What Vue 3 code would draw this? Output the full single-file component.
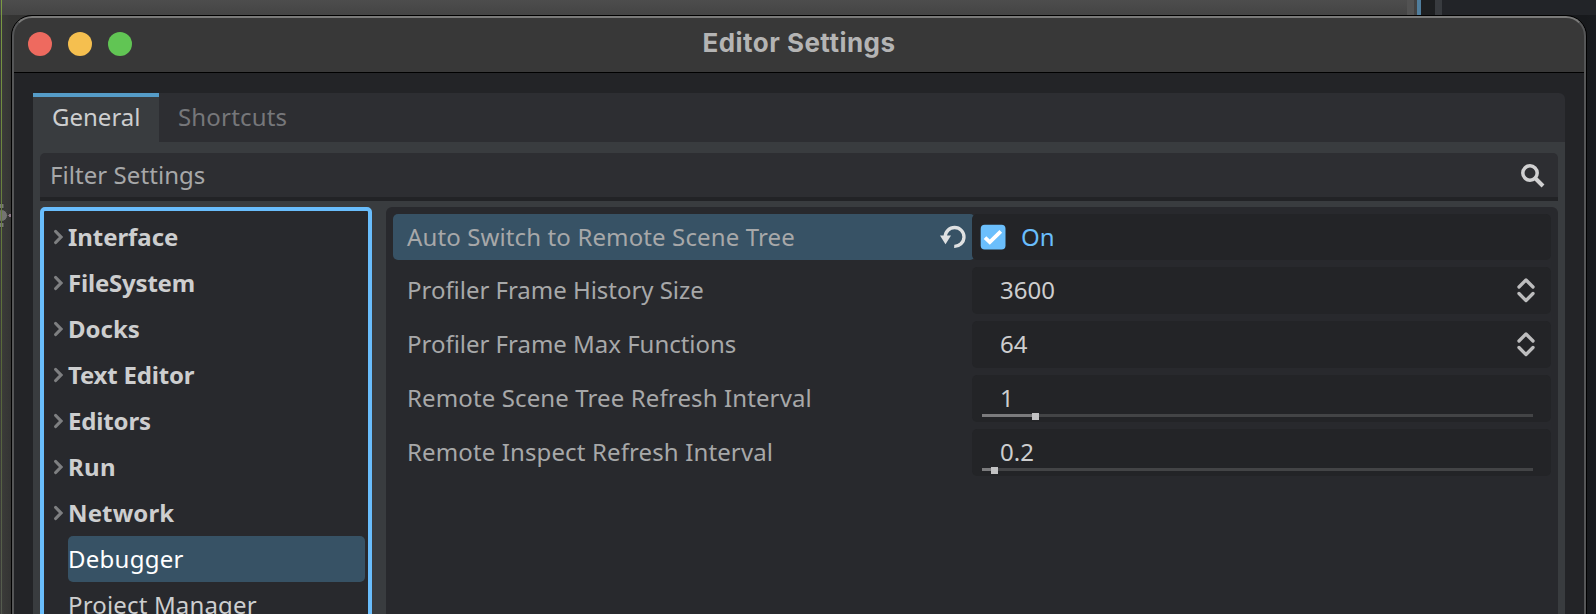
<script setup>
const groups = [
  { name: 'Interface', track: -0.06 },
  { name: 'FileSystem', track: -0.2 },
  { name: 'Docks', track: 0 },
  { name: 'Text Editor', track: -0.2 },
  { name: 'Editors', track: -0.15 },
  { name: 'Run', track: 0.3 },
  { name: 'Network', track: 0.14 },
]
const rows = [
  { label: 'Auto Switch to Remote Scene Tree', track: 0.125, kind: 'check', value: 'On' },
  { label: 'Profiler Frame History Size', track: -0.03, kind: 'spin', value: '3600' },
  { label: 'Profiler Frame Max Functions', track: -0.02, kind: 'spin', value: '64' },
  { label: 'Remote Scene Tree Refresh Interval', track: 0.12, kind: 'slider', value: '1', pos: 53 },
  { label: 'Remote Inspect Refresh Interval', track: 0.125, kind: 'slider', value: '0.2', pos: 12 },
]
</script>

<template>
  <div class="desktop">
    <div class="backdrop">
      <i class="viewport"></i><i class="scroll"></i><i class="gutter"></i><i class="accent"></i><i class="dock-edge"></i><i class="split"></i><i class="dock"></i>
    </div>
    <svg class="gizmo" viewBox="0 0 11 28" width="11" height="28">
      <path d="M0 14.5h11" stroke="#75666f" stroke-width="1" />
      <rect x="-2" y="2.500" width="6" height="5" fill="#787876" stroke="#343434" />
      <rect x="-2" y="21.500" width="6" height="5" fill="#787876" stroke="#343434" />
      <circle cx="1.500" cy="14.500" r="6" fill="#747472" stroke="#343434" />
      <rect x="9" y="13" width="2" height="3" fill="#8c7888" />
    </svg>
    <div class="window">
      <header class="titlebar">
        <div class="lights"><b class="red"></b><b class="yellow"></b><b class="green"></b></div>
        <h1>Editor Settings</h1>
      </header>
      <main class="body">
        <nav class="tabs">
          <div class="tab active"><span>General</span></div>
          <div class="tab other"><span>Shortcuts</span></div>
        </nav>
        <section class="panel">
          <div class="filter">
            <span>Filter Settings</span>
            <svg width="26" height="26" viewBox="0 0 26 26" fill="none" stroke="#d0d0d1">
              <circle cx="10" cy="10" r="7.200" stroke-width="3.500" />
              <path d="M15.500 15.500L23 23" stroke-width="4" />
            </svg>
          </div>
          <div class="split-view">
            <div class="tree">
              <div v-for="g in groups" :key="g.name" class="node">
                <svg width="10" height="16" viewBox="0 0 10 16"><path d="M2.700 2.500L8 8L2.700 13.500" fill="none" stroke="#7e7f81" stroke-width="3.200" stroke-linecap="round" /></svg>
                <span class="bold" :style="{ letterSpacing: g.track + 'px' }">{{ g.name }}</span>
              </div>
              <div class="leaf selected"><span>Debugger</span></div>
              <div class="leaf"><span>Project Manager</span></div>
            </div>
            <div class="inspector">
              <div v-for="r in rows" :key="r.label" class="row" :class="r.kind">
                <div class="label">
                  <span :style="{ letterSpacing: r.track + 'px' }">{{ r.label }}</span>
                  <svg v-if="r.kind === 'check'" width="26" height="24" viewBox="0 0 26 24">
                    <path d="M5.200 12A9.400 9.400 0 1 1 14.200 21.300" fill="none" stroke="#dfe1e2" stroke-width="3.300" />
                    <path d="M0 10.600H11L5.500 19.300Z" fill="#dfe1e2" />
                  </svg>
                </div>
                <div class="field">
                  <svg v-if="r.kind === 'check'" class="box" width="26" height="26" viewBox="0 0 26 26">
                    <rect x=".7" y=".8" width="24.800" height="24.800" rx="4" fill="#6bbffc" />
                    <path d="M5 13.700L9.800 18.200L20.800 7.400" fill="none" stroke="#fff" stroke-width="3.800" />
                  </svg>
                  <span class="value">{{ r.value }}</span>
                  <svg v-if="r.kind === 'spin'" class="updown" width="20" height="26" viewBox="0 0 20 26" fill="none" stroke="#bdbdbe" stroke-width="3.300" stroke-linecap="round" stroke-linejoin="round">
                    <path d="M3 10L10 3L17 10M3 16.500L10 23.500L17 16.500" />
                  </svg>
                  <div v-if="r.kind === 'slider'" class="track">
                    <div class="fill" :style="{ width: r.pos + 'px' }"></div>
                    <div class="grab" :style="{ left: r.pos - 3 + 'px' }"></div>
                  </div>
                </div>
              </div>
            </div>
          </div>
        </section>
      </main>
    </div>
  </div>
</template>

<style>
body { margin: 0; overflow: hidden; background: #17191c; }
</style>

<style scoped>
* { box-sizing: border-box; }
.desktop { position: relative; width: 1596px; height: 614px; overflow: hidden; padding: 15px 0 0 11px; font: 24px/46px "Noto Sans", sans-serif; color: #cdcecf;
  background: linear-gradient(90deg, #3c3c3a 0, #343433 11px, #17191c 1586px, #191b1f 1596px); }
.backdrop { position: absolute; inset: 0 0 auto 0; height: 15px; display: flex; }
.viewport { width: 1407px; background: linear-gradient(#4d4d4d, #444); }
.scroll { width: 7px; background: #525252; }
.gutter { width: 3px; background: #424242; }
.accent { width: 4px; background: #507e9d; }
.dock-edge { width: 14px; background: #1d1f21; }
.split { width: 7px; background: #383b3f; }
.dock { flex: 1; background: #222428; }
.gizmo { position: absolute; left: 0; top: 201px; }
.desktop::before { content: ""; position: absolute; z-index: 1; left: 1px; top: 0; width: 1px; height: 614px; background: linear-gradient(#7b9b43, #57663a 60%, #555b50); }
.window { position: relative; width: 1576px; height: 650px; border: 1px solid #000; border-radius: 21px 21px 0 0; background: #232427; overflow: hidden; }
.window::after { content: ""; position: absolute; inset: 0; border: 2px solid #555657; border-top-color: #7a7a79; border-radius: 20px 20px 0 0; pointer-events: none; }
.titlebar { height: 57px; background: #383838; border-bottom: 1px solid #000; display: grid; grid-template-columns: 1fr auto 1fr; align-items: center; }
.lights { display: flex; gap: 16px; padding-left: 16px; height: 24px; margin-top: -1px; }
.lights b { width: 24px; height: 24px; border-radius: 50%; }
.red { background: #ee6a5f; }
.yellow { background: #f5bf4f; }
.green { background: #61c554; }
h1 { margin: -3px 0 0; font: 700 26px/40px Inter, sans-serif; letter-spacing: .47px; color: #b4b4b4; }
.body { padding: 20px 21px 0 21px; }
.tabs { height: 49px; display: flex; background: #2d2e32; border-radius: 0 6px 0 0; }
.tab { padding: 1px 19px 0; color: #76777a; }
.tab.other { letter-spacing: .18px; }
.tab.active { width: 126px; background: #393c3f; border-top: 4px solid #559cc8; padding-top: 0; color: #cdcecf; line-height: 40px; }
.panel { background: #393c3f; padding: 11px 7px 0; height: 500px; }
.filter { height: 48px; background: #2d2e32; border-bottom: 4px solid #222326; border-radius: 5px 5px 0 0; display: flex; justify-content: space-between; align-items: center; padding: 0 12px 0 10px; color: #a7a8a9; letter-spacing: .06px; }
.filter svg { margin-top: 2px; }
.split-view { display: flex; gap: 14px; margin-top: 6px; }
.tree { width: 332px; height: 460px; border: 4px solid #69bdfc; border-radius: 5px; background: #28292d; padding: 3px; }
.node { height: 46px; display: flex; align-items: center; padding-left: 6px; gap: 5px; }
.bold { font-weight: 700; }
.leaf { height: 46px; margin-left: 21px; letter-spacing: .16px; }
.selected { background: #375265; border-radius: 5px; color: #fff; letter-spacing: .25px; }
.inspector { flex: 1; height: 460px; background: #28292d; border-radius: 6px 6px 0 0; padding: 7px; display: flex; flex-direction: column; gap: 7px; }
.row { height: 47px; display: flex; }
.row.check { height: 46px; }
.label { width: 582px; margin-right: -3px; padding: 0 0 2px 14px; display: flex; justify-content: space-between; align-items: center; color: #a7a8a9; }
.label svg { margin-right: 9px; }
.check .label { background: #375265; border-radius: 5px; padding-bottom: 0; }
.field { position: relative; flex: 1; background: #232427; border-radius: 5px; display: flex; align-items: center; padding: 0 0 2px 28px; }
.check .field { padding: 0 0 0 8px; gap: 15px; color: #69bdfc; }
.updown { margin: 0 15px 0 auto; }
.track { position: absolute; left: 10px; right: 18px; bottom: 5px; height: 3px; background: #434446; }
.fill { height: 3px; background: #7b7b7d; }
.grab { position: absolute; top: -1px; width: 7px; height: 7px; background: #c2c2c3; }
</style>
